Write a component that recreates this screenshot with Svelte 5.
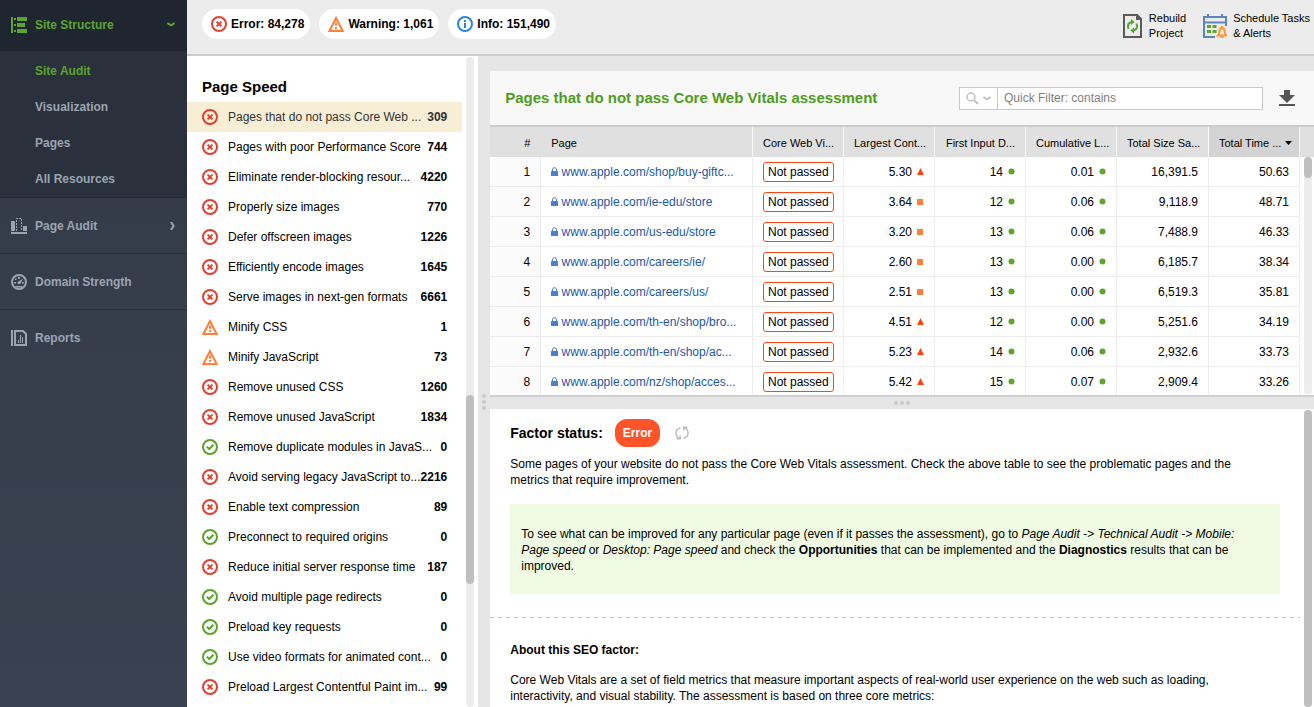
<script>

let selected = $state(0)
let section = $state("Site Audit")
let quick_filter = $state("")

const sub_items = ["Site Audit", "Visualization", "Pages", "All Resources"]

const totals = [
    { kind: "error", label: "Error: 84,278" },
    { kind: "warning", label: "Warning: 1,061" },
    { kind: "info", label: "Info: 151,490" }
]

const factors = [
    { kind: "error", name: "Pages that do not pass Core Web ...", count: 309 },
    { kind: "error", name: "Pages with poor Performance Score", count: 744 },
    { kind: "error", name: "Eliminate render-blocking resour...", count: 4220 },
    { kind: "error", name: "Properly size images", count: 770 },
    { kind: "error", name: "Defer offscreen images", count: 1226 },
    { kind: "error", name: "Efficiently encode images", count: 1645 },
    { kind: "error", name: "Serve images in next-gen formats", count: 6661 },
    { kind: "warning", name: "Minify CSS", count: 1 },
    { kind: "warning", name: "Minify JavaScript", count: 73 },
    { kind: "error", name: "Remove unused CSS", count: 1260 },
    { kind: "error", name: "Remove unused JavaScript", count: 1834 },
    { kind: "ok", name: "Remove duplicate modules in JavaS...", count: 0 },
    { kind: "error", name: "Avoid serving legacy JavaScript to...", count: 2216 },
    { kind: "error", name: "Enable text compression", count: 89 },
    { kind: "ok", name: "Preconnect to required origins", count: 0 },
    { kind: "error", name: "Reduce initial server response time", count: 187 },
    { kind: "ok", name: "Avoid multiple page redirects", count: 0 },
    { kind: "ok", name: "Preload key requests", count: 0 },
    { kind: "ok", name: "Use video formats for animated cont...", count: 0 },
    { kind: "error", name: "Preload Largest Contentful Paint im...", count: 99 }
]

const rows = [
    { page: "www.apple.com/shop/buy-giftc...", lcp: "5.30", level: "bad", fid: 14, cls: "0.01", size: "16,391.5", time: "50.63" },
    { page: "www.apple.com/ie-edu/store", lcp: "3.64", level: "medium", fid: 12, cls: "0.06", size: "9,118.9", time: "48.71" },
    { page: "www.apple.com/us-edu/store", lcp: "3.20", level: "medium", fid: 13, cls: "0.06", size: "7,488.9", time: "46.33" },
    { page: "www.apple.com/careers/ie/", lcp: "2.60", level: "medium", fid: 13, cls: "0.00", size: "6,185.7", time: "38.34" },
    { page: "www.apple.com/careers/us/", lcp: "2.51", level: "medium", fid: 13, cls: "0.00", size: "6,519.3", time: "35.81" },
    { page: "www.apple.com/th-en/shop/bro...", lcp: "4.51", level: "bad", fid: 12, cls: "0.00", size: "5,251.6", time: "34.19" },
    { page: "www.apple.com/th-en/shop/ac...", lcp: "5.23", level: "bad", fid: 14, cls: "0.06", size: "2,932.6", time: "33.73" },
    { page: "www.apple.com/nz/shop/acces...", lcp: "5.42", level: "bad", fid: 15, cls: "0.07", size: "2,909.4", time: "33.26" }
]

</script>

{#snippet status_icon(kind)}
    <svg class="icon {kind}" width="16" height="16" viewBox="0 0 16 16" fill="none" stroke="currentColor" stroke-width="2" aria-hidden="true">
        {#if kind == "error"}
            <circle cx="8" cy="8" r="7"/>
            <path d="M5.6 5.6l4.8 4.8M10.4 5.6l-4.8 4.8"/>
        {:else if kind == "warning"}
            <path d="M8 2L14.6 15H1.4z"/>
            <path d="M8 6.5v3.2M8 11v2"/>
        {:else if kind == "ok"}
            <circle cx="8" cy="8" r="7"/>
            <path d="M4.8 7.6l2.4 2.4 4.2-4.2"/>
        {:else}
            <circle cx="8" cy="8" r="7"/>
            <path d="M8 4v2M8 7v5"/>
        {/if}
    </svg>
{/snippet}

{#snippet mark(level)}
    <svg class="mark" width="7" height="7" viewBox="0 0 7 7" aria-hidden="true">
        {#if level == "bad"}
            <path d="M3.5 0L7 7H0z" fill="#ff4312"/>
        {:else if level == "medium"}
            <path d="M0 1h6v6H0z" fill="#ff8038"/>
        {:else}
            <circle cx="3.5" cy="3.5" r="3" fill="#5fa52c"/>
        {/if}
    </svg>
{/snippet}

<div class="app">
    <nav class="sidebar">
        <button class="nav-item current">
            <svg width="16" height="16" viewBox="0 0 16 16" fill="currentColor" aria-hidden="true">
                <path d="M0 0h2v16H0zM3 1h2v2H3zM3 7h2v2H3zM3 13h2v2H3zM6 0h10v4H6zM6 6h8v4H6zM6 12h10v4H6z"/>
            </svg>
            <span>Site Structure</span>
            <svg class="arrow" width="8" height="5" viewBox="0 0 8 5" fill="none" stroke="currentColor" stroke-width="2" aria-hidden="true"><path d="M.4 1L4 3.4 7.600 1"/></svg>
        </button>
        <div class="sub-menu">
            {#each sub_items as item}
                <button class:active={section == item} onclick={() => section = item}>{item}</button>
            {/each}
        </div>
        <button class="nav-item">
            <svg width="16" height="16" viewBox="0 0 16 16" fill="currentColor" aria-hidden="true">
                <path d="M0 3h4v10H0zM12 8h4v5h-4zM0 14h16v2H0z"/>
                <path d="M5.5 13V.5h5V13" fill="none" stroke="currentColor" stroke-dasharray="2 1"/>
            </svg>
            <span>Page Audit</span>
            <svg class="arrow" width="5" height="8" viewBox="0 0 5 8" fill="none" stroke="currentColor" stroke-width="2" aria-hidden="true"><path d="M1 0l2.6 4L1 8"/></svg>
        </button>
        <button class="nav-item">
            <svg width="16" height="16" viewBox="0 0 16 16" fill="currentColor" aria-hidden="true">
                <circle cx="8" cy="8" r="7" fill="none" stroke="currentColor" stroke-width="2"/>
                <path d="M7 3h2v2H7zM4 4.5h1.6v1.6H4zM3 8h2v1.5H3zM11 8h2v1.5h-2zM12.2 4.4L9.6 9.4Q8 11 6.4 9.6 6 8 7.4 7.4zM4.5 12h7v1.5h-7z"/>
            </svg>
            <span>Domain Strength</span>
        </button>
        <button class="nav-item last">
            <svg width="16" height="16" viewBox="0 0 16 16" fill="none" stroke="currentColor" aria-hidden="true">
                <path d="M1 0v16" stroke-width="2"/>
                <path d="M4 1h8l3 3v11H4z" stroke-width="2"/>
                <path d="M7.5 13v-3M9.5 13V5M11.5 13V7" />
            </svg>
            <span>Reports</span>
        </button>
    </nav>

    <div class="main">
        <header>
            {#each totals as total}
                <button class="total">{@render status_icon(total.kind)}{total.label}</button>
            {/each}
            <div class="tools">
                <button class="tool">
                    <svg width="20" height="24" viewBox="0 0 20 24" fill="none" aria-hidden="true">
                        <path d="M1 1h13l4 4v18H1z" stroke="#5a5a5a" stroke-width="2"/>
                        <path d="M13 0l6 6h-6z" fill="#5a5a5a"/>
                        <path d="M5.5 15Q3.500 9.500 8.500 8M13.500 9.500Q15.500 15 10.500 16.500" stroke="#55a62a" stroke-width="2"/>
                        <path d="M8 5l3.600 3L8 11zM11 13.500v6l-3.600-3z" fill="#55a62a"/>
                    </svg>
                    <span>Rebuild<br>Project</span>
                </button>
                <button class="tool">
                    <svg width="24" height="24" viewBox="0 0 24 24" fill="none" aria-hidden="true">
                        <path d="M12 23H1V3h22v9M1 8.500h22" stroke="#5b86bb" stroke-width="2"/>
                        <path d="M5 0v4M19 0v4" stroke="#5b86bb" stroke-width="2"/>
                        <path d="M4 11h4v3H4zM9.500 11h4v3h-4zM4 16h4v3H4zM9.500 16h4v3h-4z" fill="#5fa52c"/>
                        <path d="M15 21.500q1.500-1.500 1.500-4.500 0-3 2.500-3t2.500 3q0 3 1.500 4.500zM19 12v2" stroke="#ff962e" stroke-width="2"/>
                        <path d="M17.500 22h3v2h-3z" fill="#ff962e"/>
                    </svg>
                    <span>Schedule Tasks<br>&amp; Alerts</span>
                </button>
            </div>
        </header>

        <div class="workspace">
            <aside class="factors">
                <div class="factor-scroll">
                    <h2>Page Speed</h2>
                    <ul>
                        {#each factors as factor, i}
                            <li>
                                <button class="factor" class:selected={selected == i} onclick={() => selected = i}>
                                    {@render status_icon(factor.kind)}
                                    <span class="name">{factor.name}</span>
                                    <b>{factor.count}</b>
                                </button>
                            </li>
                        {/each}
                    </ul>
                </div>
                <div class="track"><div class="thumb factor-thumb"></div></div>
            </aside>

            <div class="splitter vertical"><i></i><i></i><i></i></div>

            <section class="content">
                <div class="title-bar">
                    <h1>Pages that do not pass Core Web Vitals assessment</h1>
                    <div class="filter">
                        <button aria-label="Filter options">
                            <svg width="13" height="13" viewBox="0 0 13 13" fill="none" stroke="#c4c4c4" aria-hidden="true"><circle cx="5" cy="5" r="4" stroke-width="1.500"/><path d="M8 8l4 4" stroke-width="2"/></svg>
                            <svg width="8" height="5" viewBox="0 0 8 5" fill="none" stroke="#c4c4c4" stroke-width="2" aria-hidden="true"><path d="M.4 1L4 3.400 7.600 1"/></svg>
                        </button>
                        <input type="text" aria-label="Quick Filter" placeholder="Quick Filter: contains" bind:value={quick_filter}>
                    </div>
                    <button class="download" aria-label="Download">
                        <svg width="16" height="16" viewBox="0 0 16 16" fill="#555" aria-hidden="true"><path d="M5 0h6v5h5l-8 8-8-8h5zM0 14h16v2H0z"/></svg>
                    </button>
                </div>

                <div class="grid">
                    <table>
                        <colgroup>
                            <col class="c-num"><col><col class="c-val"><col class="c-val"><col class="c-val"><col class="c-val"><col class="c-size"><col class="c-val"><col class="c-bar">
                        </colgroup>
                        <thead>
                            <tr>
                                <th class="num plain">#</th>
                                <th class="page">Page</th>
                                <th>Core Web Vi...</th>
                                <th>Largest Cont...</th>
                                <th class="num">First Input D...</th>
                                <th class="num">Cumulative L...</th>
                                <th class="num">Total Size Sa...</th>
                                <th class="num sorted">Total Time ...<svg width="7" height="4" viewBox="0 0 7 4" aria-hidden="true"><path d="M0 0h7L3.500 4z"/></svg></th>
                                <th class="plain" aria-label="Scroll"></th>
                            </tr>
                        </thead>
                        <tbody>
                            {#each rows as row, i}
                                <tr>
                                    <td class="index">{i + 1}</td>
                                    <td class="page">
                                        <svg width="7" height="9" viewBox="0 0 7 9" aria-hidden="true"><path d="M0 4h7v5H0z" fill="#4a80cc"/><path d="M1.500 4.500V3q0-2.400 2-2.400t2 2.400v1.500" fill="none" stroke="#4a80cc"/></svg>
                                        <a href="https://{row.page}">{row.page}</a>
                                    </td>
                                    <td class="state"><span class="badge">Not passed</span></td>
                                    <td class="num">{row.lcp}{@render mark(row.level)}</td>
                                    <td class="num">{row.fid}{@render mark("good")}</td>
                                    <td class="num">{row.cls}{@render mark("good")}</td>
                                    <td class="num">{row.size}</td>
                                    <td class="num">{row.time}</td>
                                    <td class="blank"></td>
                                </tr>
                            {/each}
                        </tbody>
                    </table>
                    <div class="track grid-track"><div class="thumb grid-thumb"></div></div>
                </div>

                <div class="splitter horizontal"><i></i><i></i><i></i></div>

                <div class="details">
                    <div class="details-body">
                        <div class="status">
                            <h2>Factor status:</h2>
                            <span class="status-pill">Error</span>
                            <button aria-label="Refresh">
                                <svg width="14" height="14" viewBox="0 0 14 14" fill="none" stroke="#bdbdbd" stroke-width="1.500" aria-hidden="true">
                                    <path d="M5.500 1.800Q1 3 1 7t3.500 5M8.500 12.200Q13 11 13 7T9.500 2"/>
                                    <path d="M1.500 12.800H5.200V9.500M12.500 1.200H8.800V4.500"/>
                                </svg>
                            </button>
                        </div>
                        <p>Some pages of your website do not pass the Core Web Vitals assessment. Check the above table to see the problematic pages and the<br>metrics that require improvement.</p>
                        <div class="hint">To see what can be improved for any particular page (even if it passes the assessment), go to <em>Page Audit -&gt; Technical Audit -&gt; Mobile:<br>Page speed</em> or <em>Desktop: Page speed</em> and check the <b>Opportunities</b> that can be implemented and the <b>Diagnostics</b> results that can be<br>improved.</div>
                        <hr>
                        <h3>About this SEO factor:</h3>
                        <p>Core Web Vitals are a set of field metrics that measure important aspects of real-world user experience on the web such as loading,<br>interactivity, and visual stability. The assessment is based on three core metrics:</p>
                    </div>
                    <div class="track details-track"><div class="thumb details-thumb"></div></div>
                </div>
            </section>
        </div>
    </div>
</div>

<style>

:global(body) {
    margin: 0;
}

.app {
    display: flex;
    height: 100vh;
    overflow: hidden;
    font-family: "Liberation Sans", Arial, sans-serif;
    font-size: 12px;
    line-height: 16px;
    color: #000;
    background: #fff;
}

button {
    font: inherit;
    color: inherit;
    background: none;
    border: none;
    padding: 0;
    margin: 0;
    cursor: pointer;
}

h1, h2, h3, p, ul {
    margin: 0;
    padding: 0;
}

svg {
    display: block;
    flex: none;
}

/* left navigation */

.sidebar {
    flex: 0 0 187px;
    display: flex;
    flex-direction: column;
    background: linear-gradient(#353c49 200px, #3a4150);
    color: #9ba5b1;
    font-weight: bold;
}

.nav-item {
    box-sizing: border-box;
    display: flex;
    align-items: center;
    gap: 8px;
    height: 56px;
    padding: 0 12px 0 11px;
    border-bottom: 1px solid #2a303b;
    font-weight: bold;
    text-align: left;
}

.nav-item.last {
    border-bottom: none;
}

.nav-item.current {
    height: 52px;
    padding-bottom: 2px;
    background: #1f2630;
    color: #5ba52d;
}

.arrow {
    margin-left: auto;
}

.sub-menu {
    display: flex;
    flex-direction: column;
    padding-top: 1px;
    background: #2a303c;
    border-bottom: 1px solid #252b35;
}

.sub-menu button {
    height: 36px;
    padding-left: 35px;
    font-weight: bold;
    text-align: left;
}

.sub-menu .active {
    color: #5ba52d;
}

/* top bar */

.main {
    flex: 1;
    min-width: 0;
    display: flex;
    flex-direction: column;
}

header {
    flex: none;
    box-sizing: border-box;
    display: flex;
    align-items: center;
    gap: 9px;
    height: 56px;
    padding: 0 4px 6px 15px;
    background: #ececec;
    border-bottom: 2px solid #cbcbcb;
}

.total {
    display: flex;
    align-items: center;
    gap: 4px;
    height: 30px;
    padding: 0 6px 0 9px;
    border-radius: 15px;
    background: #fff;
    font-weight: bold;
    white-space: nowrap;
}

.tools {
    display: flex;
    gap: 17px;
    margin-left: auto;
    padding-top: 4px;
}

.tool {
    display: flex;
    align-items: center;
    gap: 6px;
    font-size: 11px;
    line-height: 15px;
    text-align: left;
    white-space: nowrap;
}

.error { color: #e2402f; }
.warning { color: #ff8038; }
.ok { color: #5aa42b; }
.info { color: #2d87d8; }

/* factor list */

.workspace {
    flex: 1;
    min-height: 0;
    display: flex;
}

.factors {
    flex: 0 0 291px;
    display: flex;
    gap: 4px;
}

.factor-scroll {
    flex: 1;
    overflow: hidden;
}

.factors h2 {
    padding: 22px 0 6px 15px;
    font-size: 15px;
    line-height: 18px;
}

.factors ul {
    list-style: none;
}

.factor {
    display: flex;
    align-items: center;
    width: 100%;
    height: 30px;
    padding: 0 15px;
    text-align: left;
    white-space: nowrap;
}

.factor.selected {
    background: #f7eed5;
    color: #333;
}

.factor .name {
    flex: 1;
    min-width: 0;
    margin-left: 10px;
}

.track {
    flex: 0 0 8px;
    margin: 1px 4px 0 0;
    border-radius: 4px;
    background: #ececec;
}

.thumb {
    border-radius: 4px;
    background: #bfbfbf;
}

.factor-thumb {
    height: 29%;
    margin-top: 338px;
}

.factors .track {
    display: flow-root;
}

.splitter {
    flex: 0 0 12px;
    display: flex;
    align-items: center;
    justify-content: center;
    gap: 2px;
    background: #e6e6e6;
}

.splitter.vertical {
    flex-direction: column;
    padding-top: 40px;
}

.splitter i {
    width: 4px;
    height: 4px;
    border-radius: 2px;
    background: #c9c9c9;
}

/* table pane */

.content {
    flex: 1;
    min-width: 0;
    display: flex;
    flex-direction: column;
}

.title-bar {
    display: flex;
    align-items: center;
    height: 54px;
    padding: 0 19px 0 15px;
    background: #f8f8f8;
    border-top: 15px solid #e6e6e6;
    border-bottom: 2px solid #cbcbcb;
}

h1 {
    margin-right: auto;
    color: #4f9d22;
    font-size: 15px;
    line-height: 18px;
}

.filter {
    box-sizing: border-box;
    display: flex;
    width: 304px;
    height: 23px;
    border: 1px solid #c9c9c9;
    background: #fff;
}

.filter button {
    display: flex;
    align-items: center;
    justify-content: center;
    gap: 4px;
    width: 38px;
    border-right: 1px solid #c9c9c9;
}

.filter input {
    flex: 1;
    min-width: 0;
    padding: 0 6px;
    border: none;
    outline: none;
    background: none;
    font: inherit;
}

.filter input::placeholder {
    color: #808080;
    opacity: 1;
}

.download {
    margin-left: 16px;
}

.grid {
    position: relative;
    flex: none;
    max-height: 268px;
    overflow: hidden;
}

table {
    width: 100%;
    table-layout: fixed;
    border-collapse: separate;
    border-spacing: 0;
}

.c-num { width: 51px; }
.c-val { width: 91px; }
.c-size { width: 92px; }
.c-bar { width: 14px; }

th, td {
    box-sizing: border-box;
    height: 30px;
    padding: 0 10px;
    border-right: 1px solid #ededed;
    white-space: nowrap;
    text-align: left;
}

th {
    padding-top: 2px;
    background: #e0e0e0;
    border-right-color: #f8f8f8;
    font-size: 11px;
    font-weight: normal;
}

th.plain {
    border-right-color: #e0e0e0;
}

td {
    border-bottom: 1px solid #ededed;
}

.num, .index {
    text-align: right;
}

.index {
    background: #fbfbfb;
}

th.sorted {
    padding-right: 8px;
    background: #d4d4d4;
}

th svg {
    display: inline-block;
    margin-left: 4px;
    vertical-align: 2px;
}

td svg {
    display: inline-block;
}

.page a {
    color: #2257a8;
    text-decoration: none;
}

.mark {
    margin-left: 5px;
    vertical-align: 1px;
}

.badge {
    display: inline-block;
    padding: 0 4px;
    line-height: 18px;
    border: 1px solid #ff4312;
    border-radius: 3px;
}

td.blank {
    border: none;
}

.grid-track {
    position: absolute;
    top: 30px;
    right: 2px;
    bottom: 1px;
    width: 8px;
    margin: 0;
}

.grid-thumb {
    height: 21px;
}

.splitter.horizontal {
    border-top: 2px solid #d0d0d0;
}

/* factor description */

.details {
    flex: 1;
    min-height: 0;
    display: flex;
}

.details-body {
    flex: 1;
    overflow: hidden;
    padding-top: 10px;
}

.details-body p, .details-body h3, .status {
    padding: 0 20px;
}

.status {
    display: flex;
    align-items: center;
    margin-bottom: 9px;
}

.status h2 {
    font-size: 14px;
    line-height: 18px;
}

.status-pill {
    margin: 0 15px 0 12px;
    padding: 0 8px;
    border-radius: 12px;
    background: #ff5429;
    color: #fff;
    font-weight: bold;
    line-height: 28px;
}

.hint {
    margin: 16px 20px 0;
    padding: 22px 11px 20px;
    background: #f0fbe3;
}

hr {
    height: 1px;
    margin: 23px 0 24px;
    border: none;
    background: repeating-linear-gradient(90deg, #c0c0c0 0 4px, transparent 4px 8px);
}

h3 {
    margin-bottom: 14px;
    font-size: 12px;
    line-height: 16px;
}

.details-track {
    margin-right: 2px;
    margin-left: 4px;
}

.details-thumb {
    height: 100%;
}

</style>
